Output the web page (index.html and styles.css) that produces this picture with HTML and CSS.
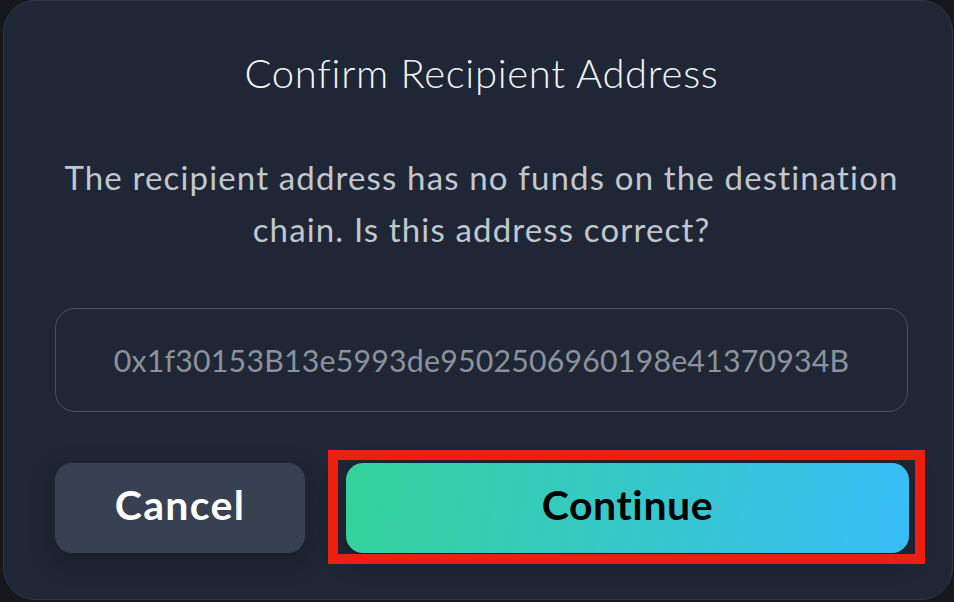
FILE: index.html
```html
<!DOCTYPE html>
<html lang="en">
<head>
<meta charset="utf-8">
<title>Confirm Recipient Address</title>
<link rel="stylesheet" href="styles.css">
</head>
<body>
<div class="backdrop">
  <div class="modal">
    <h1 class="title">Confirm Recipient Address</h1>
    <p class="message">The recipient address has no funds on the destination chain. Is this address correct?</p>
    <div class="address">0x1f30153B13e5993de9502506960198e41370934B</div>
    <div class="actions">
      <button class="btn btn-cancel">Cancel</button>
      <div class="continue-wrap">
        <button class="btn btn-continue">Continue</button>
        <div class="highlight"></div>
      </div>
    </div>
  </div>
</div>
</body>
</html>
```
FILE: styles.css
```css
html, body {
  margin: 0;
  padding: 0;
  background: #14171c;
  width: 954px;
  height: 602px;
  overflow: hidden;
}
.backdrop {
  padding-left: 3px;
  height: 602px;
  box-sizing: border-box;
}
.modal {
  box-sizing: border-box;
  width: 950px;
  height: 600px;
  background: #1f2736;
  border: 1px solid #2e3848;
  border-radius: 32px;
  padding: 44px 44px 0 51px;
  font-family: "Lato", "Inter", sans-serif;
  display: flex;
  flex-direction: column;
  align-items: stretch;
}
.title {
  margin: 0;
  font-size: 40px;
  font-weight: 300;
  line-height: 56px;
  color: #f4f5f7;
  text-align: center;
  letter-spacing: 0.7px;
}
.message {
  margin: 50px auto 0 auto;
  max-width: 854px;
  font-size: 33px;
  line-height: 52px;
  color: #c2c6cd;
  text-align: center;
  font-weight: 400;
  letter-spacing: 1.15px;
}
.address {
  margin-top: 53px;
  height: 104px;
  box-sizing: border-box;
  border: 1.5px solid #485161;
  border-radius: 20px;
  display: flex;
  align-items: center;
  justify-content: center;
  font-size: 30.3px;
  color: #8c929c;
  letter-spacing: 0.2px;
}
.actions {
  margin-top: 51px;
  display: flex;
  gap: 41px;
  width: 854px;
}
.btn {
  height: 90px;
  border: none;
  border-radius: 17px;
  font-family: "Lato", "Inter", sans-serif;
  font-weight: 700;
  font-size: 41px;
  padding: 0 0 7px 0;
  cursor: pointer;
  box-shadow: 0 8px 24px rgba(10, 14, 22, 0.35);
}
.btn-cancel {
  width: 250px;
  background: #374152;
  color: #ffffff;
  letter-spacing: 1.3px;
}
.continue-wrap {
  flex: 1;
  position: relative;
  display: flex;
}
.btn-continue {
  flex: 1;
  background: linear-gradient(100deg, #34d399 0%, #38bdf8 100%);
  color: #000000;
  letter-spacing: 0.6px;
}
.highlight {
  position: absolute;
  left: -18px;
  top: -13px;
  width: 597px;
  height: 114px;
  box-sizing: border-box;
  border: 10px solid #ee1f0f;
  pointer-events: none;
}
```
